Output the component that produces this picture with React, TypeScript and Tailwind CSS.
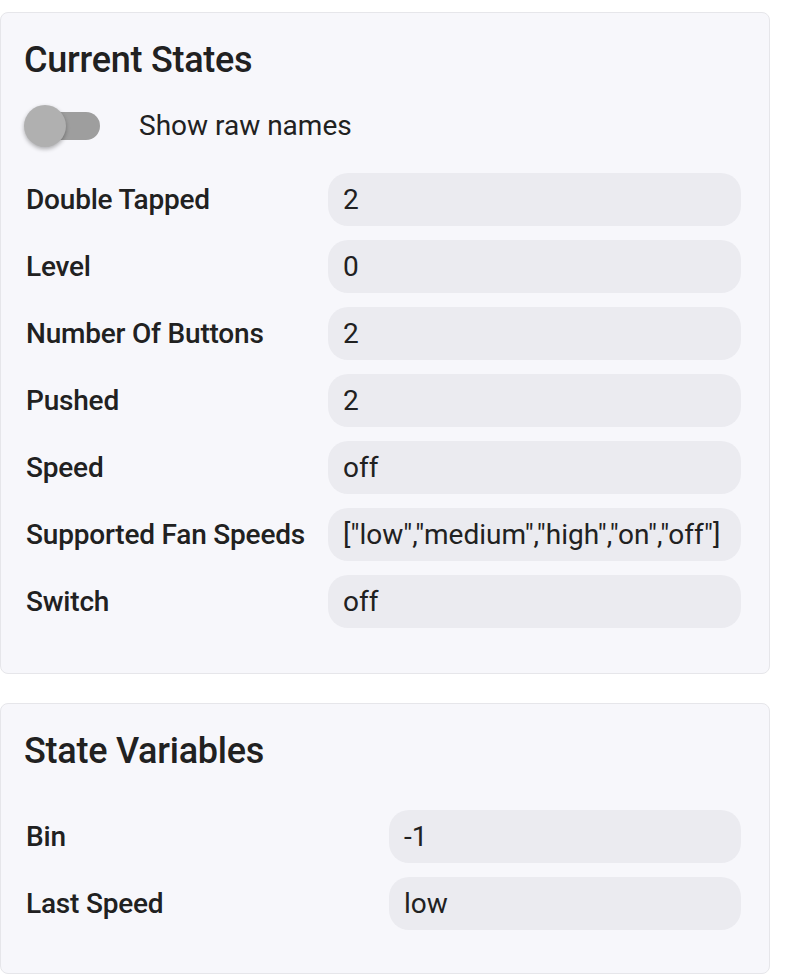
import React from "react";

const currentStates = [
  { label: "Double Tapped", value: "2" },
  { label: "Level", value: "0" },
  { label: "Number Of Buttons", value: "2" },
  { label: "Pushed", value: "2" },
  { label: "Speed", value: "off" },
  { label: "Supported Fan Speeds", value: '["low","medium","high","on","off"]' },
  { label: "Switch", value: "off" },
];

const stateVariables = [
  { label: "Bin", value: "-1" },
  { label: "Last Speed", value: "low" },
];

function Row({ label, value, labelWidth }: { label: string; value: string; labelWidth: string }) {
  return (
    <div className="flex items-center h-[53px]">
      <div className={`${labelWidth} shrink-0 text-[28px] font-medium text-[#212121] tracking-[-0.2px] pl-[2px]`}>{label}</div>
      <div className="flex-1 h-[53px] rounded-[20px] bg-[#ebebf0] flex items-center px-[15px] text-[28px] text-[#212121] whitespace-nowrap overflow-hidden">
        {value}
      </div>
    </div>
  );
}

export default function App() {
  return (
    <div className="bg-white min-h-[978px] pt-[12px] pr-[20px] font-['Roboto',sans-serif]">
      <div className="border border-[#e6e6ea] rounded-[8px] bg-[#f7f7fb] pl-[23px] pr-[28px] pt-[23px] pb-[45px]">
        <h2 className="h-[48px] flex items-center text-[36px] font-medium text-[#212121] tracking-[-0.25px]">Current States</h2>
        <div className="mt-[21px] h-[42px] flex items-center">
          <div className="relative w-[76px] h-[42px] shrink-0">
            <div className="absolute left-[4px] right-0 top-[7px] h-[28px] rounded-full bg-[#9e9e9e]" />
            <div className="absolute left-0 top-0 w-[42px] h-[42px] rounded-full bg-[#b0b0b0] shadow-[0_2px_4px_rgba(0,0,0,0.3)]" />
          </div>
          <span className="ml-[39px] text-[28px] text-[#212121]">Show raw names</span>
        </div>
        <div className="mt-[26px] flex flex-col gap-[14px]">
          {currentStates.map((r) => (
            <Row key={r.label} label={r.label} value={r.value} labelWidth="w-[304px]" />
          ))}
        </div>
      </div>

      <div className="mt-[29px] border border-[#e6e6ea] rounded-[8px] bg-[#f7f7fb] pl-[23px] pr-[28px] pt-[23px] pb-[43px]">
        <h2 className="h-[48px] flex items-center text-[36px] font-medium text-[#212121] tracking-[-0.25px]">State Variables</h2>
        <div className="mt-[35px] flex flex-col gap-[14px]">
          {stateVariables.map((r) => (
            <Row key={r.label} label={r.label} value={r.value} labelWidth="w-[365px]" />
          ))}
        </div>
      </div>
    </div>
  );
}
